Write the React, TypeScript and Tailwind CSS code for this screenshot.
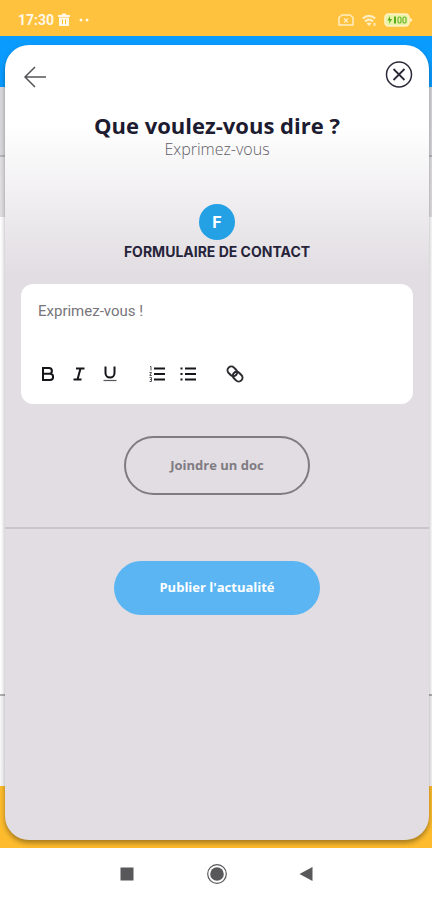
import { useState, type ReactNode } from 'react';

type ToolButtonProps = {
    label: string;
    className?: string;
    children: ReactNode;
};

function ToolButton({ label, className = '', children }: ToolButtonProps) {
    return (
        <button type="button" aria-label={label} title={label} className={`w-5 h-5 flex items-center justify-center ${className}`}>
            <svg viewBox="0 0 20 20" className="w-5 h-5" fill="none" stroke="#16161a" strokeWidth="2">
                {children}
            </svg>
        </button>
    );
}

function StatusBar() {
    return (
        <header className="h-9 pt-1 pl-[18px] pr-5 flex items-center justify-between bg-[#ffc23e] text-[#fff8e6]">
            <div className="flex items-center gap-1">
                <span className="text-sm font-bold font-['Roboto',sans-serif]">17:30</span>
                <svg viewBox="0 0 12 14" className="w-3 h-[14px]" fill="currentColor">
                    <path d="M0 2h3.500l.8-1.500h3.400L8.500 2H12v2H0zM1 4.500h10V13H1z" />
                    <path d="M4.500 6.500v4.500M7.500 6.500v4.500" stroke="#ffc23e" strokeWidth="1" />
                </svg>
                <svg viewBox="0 0 12 4" className="w-3 h-1 ml-1" fill="currentColor">
                    <circle cx="3" cy="2" r="1.500" />
                    <circle cx="9" cy="2" r="1.500" />
                </svg>
            </div>
            <div className="flex items-center gap-2">
                <svg viewBox="0 0 16 12" className="w-4 h-3" fill="none" stroke="#ffeec2" strokeWidth="1.500">
                    <path d="M4 1h8l3 2.500V11H1V3.500z" strokeLinejoin="round" />
                    <path d="M6 4.500l4 4M10 4.500l-4 4" strokeWidth="1.200" />
                </svg>
                <svg viewBox="0 0 14 12" className="w-[14px] h-3" fill="none" stroke="#ffeec2" strokeWidth="2.200">
                    <path d="M.8 4.500C4.500 1 9.500 1 13.200 4.500M3 7.500c2.500-2.300 5.500-2.300 8 0" />
                    <path d="M4.500 9.500c1.500-1.200 3.500-1.200 5 0L7 12z" fill="#ffeec2" stroke="none" />
                    <path d="M12.500 9v3" strokeWidth="1.800" />
                </svg>
                <svg viewBox="0 0 28 14" className="w-7 h-[14px]">
                    <rect x="1" y="1" width="24" height="12" rx="3.500" fill="#e9f3a8" stroke="#fff3c4" strokeWidth="1.600" />
                    <path d="M26 5l2 1v2l-2 1z" fill="#fff3c4" />
                    <path d="M6 3L3.500 7.500h2L5 11l3-5H6zM10 3.500h2v7h-2z" fill="#58ad16" />
                    <rect x="14" y="4" width="3" height="6" rx="1.300" fill="none" stroke="#6db82b" strokeWidth="1.200" />
                    <rect x="19" y="4" width="3" height="6" rx="1.300" fill="none" stroke="#6db82b" strokeWidth="1.200" />
                </svg>
            </div>
        </header>
    );
}

/* Page that stays visible around the edges of the sheet */
function Backdrop() {
    return (
        <div aria-hidden="true" className="absolute inset-0 flex flex-col bg-white">
            <div className="h-[51px] bg-[#0a9bff]" />
            <div className="h-[68px] bg-[#d9d8da]" />
            <div className="h-[62px] bg-[#e2e0e3] border-t-2 border-[#b9b7ba]" />
            <div className="flex-1 bg-white" />
            <div className="h-[92px] bg-[#f7f6f8] border-t-2 border-[#b1b0b3]" />
            <div className="h-[62px] bg-[#fdbb2d]" />
        </div>
    );
}

function Editor() {
    const [message, setMessage] = useState('');

    return (
        <div className="mt-6 mx-4 pt-4 pb-5 px-[17px] bg-white rounded-xl">
            <textarea
                aria-label="Exprimez-vous"
                value={message}
                onChange={(e) => setMessage(e.target.value)}
                placeholder="Exprimez-vous !"
                className="block w-full h-16 resize-none outline-none font-['Roboto',sans-serif] text-[15px] leading-[22px] text-[#333] placeholder:text-[#77757a]"
            />
            <div className="flex items-center gap-[11px]">
                <ToolButton label="Gras">
                    <path d="M5 4h6a2.900 2.900 0 010 5.800H5zM5 9.800h7a3.100 3.100 0 010 6.200H5z" />
                </ToolButton>
                <ToolButton label="Italique">
                    <path d="M7 4.500h8.500M4.500 15.500h8M11.500 4.500L8.500 15.500" />
                </ToolButton>
                <ToolButton label="Souligné">
                    <path d="M5.500 2.500v6.500a4.500 4.500 0 009 0V2.500" />
                    <path d="M3.500 16.500h13" stroke="#55555a" strokeWidth="1.200" />
                </ToolButton>
                <ToolButton label="Liste numérotée" className="ml-4">
                    <path d="M7 4.500h11M7 10h11M7 15.500h11" />
                    <path d="M3 2.500h1v4M2.500 8.500H4.500L2.800 11.500h2M2.500 13.500h2v4h-2M3 15.500h1.500" stroke="#55555a" strokeWidth="1" />
                </ToolButton>
                <ToolButton label="Liste à puces">
                    <path d="M7 4.500h11M7 10h11M7 15.500h11M2.500 4.500h2M2.500 10h2M2.500 15.500h2" />
                </ToolButton>
                <ToolButton label="Lien" className="ml-4">
                    <g transform="rotate(45 10 10)" stroke="#2c2c31" strokeWidth="2">
                        <rect x="1" y="6.200" width="10.500" height="7.600" rx="3.800" />
                        <rect x="8.500" y="6.200" width="10.500" height="7.600" rx="3.800" />
                    </g>
                </ToolButton>
            </div>
        </div>
    );
}

function NavBar() {
    return (
        <nav className="h-[52px] pl-0.5 flex items-center justify-center gap-[68px] bg-white text-[#58585a]">
            <button type="button" aria-label="Applications récentes">
                <svg viewBox="0 0 22 22" className="w-[22px] h-[22px]">
                    <rect x="4.500" y="4.500" width="13" height="13" fill="currentColor" />
                </svg>
            </button>
            <button type="button" aria-label="Accueil">
                <svg viewBox="0 0 22 22" className="w-[22px] h-[22px]">
                    <circle cx="11" cy="11" r="9.300" fill="none" stroke="currentColor" strokeWidth="1.200" />
                    <circle cx="11" cy="11" r="6.800" fill="currentColor" />
                </svg>
            </button>
            <button type="button" aria-label="Retour système">
                <svg viewBox="0 0 22 22" className="w-[22px] h-[22px]">
                    <path d="M3.500 11L16.500 4v14z" fill="currentColor" />
                </svg>
            </button>
        </nav>
    );
}

export default function App() {
    return (
        <div className="min-h-screen flex flex-col font-['Open_Sans',sans-serif]">
            <StatusBar />

            <div className="relative flex-1 flex flex-col">
                <Backdrop />
                <main className="relative flex-1 flex flex-col mt-[9px] mb-2 ml-[5px] mr-[3px] rounded-3xl bg-[#e1dde2] bg-linear-to-b from-white from-[80px] to-[#e1dde2] to-[230px] shadow-[0_3px_5px_rgba(0,0,0,0.35)]">
                    <div className="pt-4 px-4 flex items-start justify-between">
                        <button type="button" aria-label="Retour" className="mt-1">
                            <svg viewBox="0 0 26 24" className="w-[26px] h-6" fill="none" stroke="#55555a" strokeWidth="1.500">
                                <path d="M25 12H4M14 2L4 12l10 10" />
                            </svg>
                        </button>
                        <button type="button" aria-label="Fermer">
                            <svg viewBox="0 0 28 28" className="w-7 h-7" fill="none" stroke="#2b2b38">
                                <circle cx="14" cy="13.500" r="12.500" strokeWidth="1.500" />
                                <path d="M8.500 8l11 11M19.500 8L8.500 19" strokeWidth="1.800" />
                            </svg>
                        </button>
                    </div>

                    <div className="mt-5 text-center">
                        <h1 className="text-[22px] leading-8 font-bold text-[#1c1b30]">Que voulez-vous dire ?</h1>
                        <p className="text-base leading-4 font-light text-[#5f5d66]">Exprimez-vous</p>
                    </div>

                    <div className="mt-[47px] flex flex-col items-center gap-1">
                        <span className="w-9 h-9 flex items-center justify-center rounded-full bg-[#24a0e5] text-white text-base font-bold font-['Inter',sans-serif]">F</span>
                        <h2 className="text-sm leading-4 font-bold text-[#26243a] font-['Inter',sans-serif]">FORMULAIRE DE CONTACT</h2>
                    </div>

                    <Editor />

                    <button
                        type="button"
                        className="mt-8 self-center px-11 h-[59px] rounded-full border-2 border-[#7f7b82] text-[13px] font-bold text-[#7f7b82]"
                    >
                        Joindre un doc
                    </button>

                    <hr className="mt-8 border-t-2 border-[#c9c5ca]" />

                    <button
                        type="button"
                        className="mt-8 self-center px-[45px] h-[54px] rounded-full bg-[#5bb5f3] text-[13px] font-bold text-white"
                    >
                        Publier l'actualité
                    </button>
                </main>
            </div>

            <NavBar />
        </div>
    );
}
